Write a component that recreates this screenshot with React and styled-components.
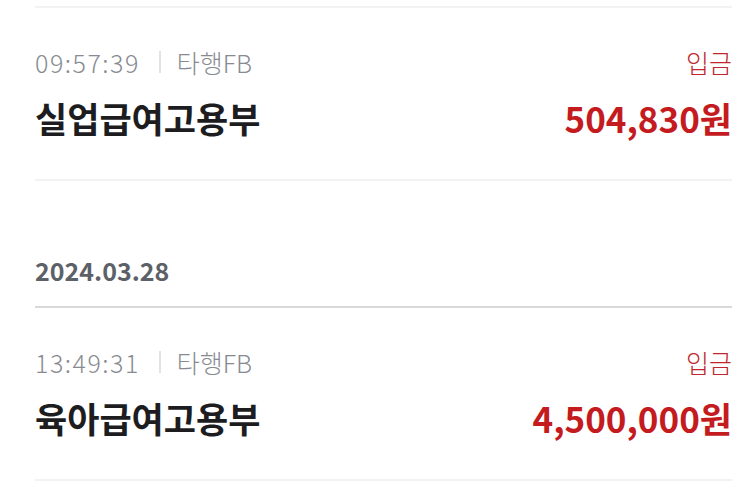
import styled, { createGlobalStyle } from 'styled-components';

const GlobalStyle = createGlobalStyle`
  html, body {
    margin: 0;
    padding: 0;
    background: #fff;
    font-family: 'Noto Sans CJK KR', 'Noto Sans', sans-serif;
  }
`;

const List = styled.div`
  width: 743px;
  height: 483px;
  overflow: hidden;
  padding: 6px 11px 0 35px;
  box-sizing: border-box;
`;

const Divider = styled.div`
  height: 2px;
  background: ${(p) => (p.$strong ? '#d9d9d9' : '#f2f2f4')};
`;

const Item = styled.div`
  display: flex;
  justify-content: space-between;
  align-items: flex-end;
  padding: 36px 0 38px;
`;

const Left = styled.div`
  display: flex;
  flex-direction: column;
  gap: 15px;
`;

const Right = styled.div`
  display: flex;
  flex-direction: column;
  align-items: flex-end;
  gap: 15px;
`;

const Meta = styled.div`
  display: flex;
  align-items: center;
  font-size: 25px;
  font-weight: 300;
  color: #878b91;
  height: 36px;
  line-height: 36px;
`;

const Time = styled.span`
  letter-spacing: 1.5px;
`;

const Sep = styled.span`
  width: 2px;
  height: 22px;
  background: #e3e3e3;
  margin: 0 16px 0 19px;
`;

const Title = styled.div`
  font-size: 35px;
  font-weight: 700;
  color: #1d1d1f;
  line-height: 46px;
`;

const Kind = styled.div`
  font-size: 25px;
  font-weight: 300;
  color: #c0272d;
  height: 36px;
  line-height: 36px;
`;

const Amount = styled.div`
  font-size: 35px;
  font-weight: 700;
  color: #c41b1f;
  line-height: 46px;
`;

const DateHead = styled.div`
  font-size: 25px;
  font-weight: 700;
  color: #5c6168;
  line-height: 34px;
  padding: 72px 0 19px;
`;

const Tx = ({ time, title, amount }) => (
  <Item>
    <Left>
      <Meta>
        <Time>{time}</Time>
        <Sep />
        타행FB
      </Meta>
      <Title>{title}</Title>
    </Left>
    <Right>
      <Kind>입금</Kind>
      <Amount>{amount}</Amount>
    </Right>
  </Item>
);

export default function App() {
  return (
    <>
      <GlobalStyle />
      <List>
        <Divider />
        <Tx time="09:57:39" title="실업급여고용부" amount="504,830원" />
        <Divider />
        <DateHead>2024.03.28</DateHead>
        <Divider $strong />
        <Tx time="13:49:31" title="육아급여고용부" amount="4,500,000원" />
        <Divider />
      </List>
    </>
  );
}
